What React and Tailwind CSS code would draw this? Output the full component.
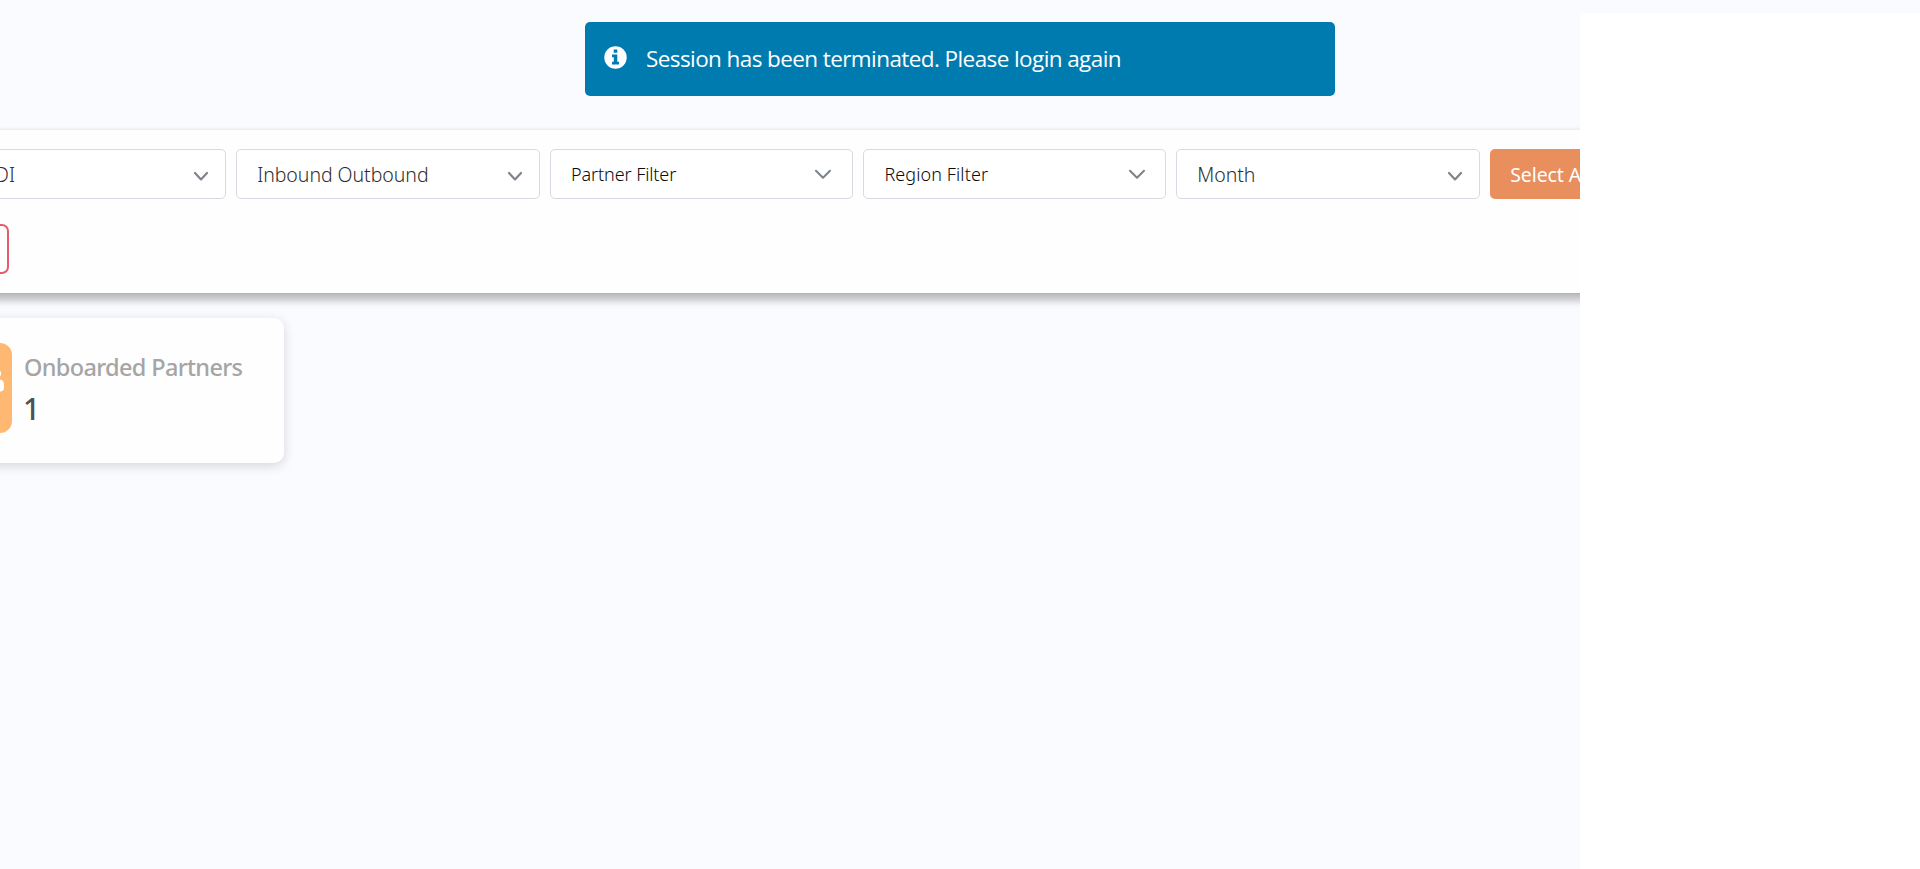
function Chevron({ wide = false }) {
  return wide ? (
    <svg className="h-[11px] w-[18px] shrink-0" viewBox="0 0 18 11" fill="none" stroke="#7f858d" strokeWidth="2.1" strokeLinecap="round" strokeLinejoin="round">
      <path d="M2 1.8 9 8.7 16 1.8" />
    </svg>
  ) : (
    <svg className="mt-[4px] h-[11px] w-[16px] shrink-0" viewBox="0 0 16 11" fill="none" stroke="#7f858d" strokeWidth="2.2" strokeLinecap="round" strokeLinejoin="round">
      <path d="M2 2 8 8.4 14 2" />
    </svg>
  );
}

const box = "flex h-[50px] w-[303.4px] shrink-0 items-center justify-between rounded-[5px] border border-[#d5dbe1] bg-white";

function Select({ label }) {
  return (
    <div className={`${box} pl-[20px] pr-[16px] text-[19.5px] text-[#2e2e2e]`}>
      <span className="pt-[2px] tracking-[-0.05px]">{label}</span>
      <Chevron />
    </div>
  );
}

function MultiSelect({ label, spacing }) {
  return (
    <div className={`${box} pl-[20.5px] pr-[19.5px] text-[18px] text-[#0c0c0c]`}>
      <span className={spacing}>{label}</span>
      <Chevron wide />
    </div>
  );
}

function Toast() {
  return (
    <div className="absolute left-[585px] top-[22px] flex h-[74px] w-[750px] items-center rounded-[5px] bg-[#007baf] pl-[19px] text-white">
      <svg className="mb-[3px] size-[23px] shrink-0" viewBox="0 0 23 23">
        <circle cx="11.5" cy="11.5" r="11.2" fill="#fff" />
        <path fill="#007baf" d="M9.7 3.4h3.6v3.4H9.7zM8 8.6h5.3v7.1H15V18.4H8v-2.7h1.8v-4.4H8z" />
      </svg>
      <p className="ml-[19px] whitespace-nowrap font-['Open_Sans','Noto_Sans',sans-serif] text-[22.5px] tracking-[-0.59px]">
        Session has been terminated. Please login again
      </p>
    </div>
  );
}

export default function App() {
  return (
    <div className="relative flex h-[869px] w-full flex-col overflow-hidden bg-[#fafbff] pt-[13px] font-['Noto_Sans','Open_Sans',sans-serif]">
      <div className="flex flex-1">
        <main className="flex w-[1580px] shrink-0 flex-col overflow-hidden pt-[116.5px]">
          <section className="-mx-[78px] flex h-[163.5px] shrink-0 flex-col gap-[25px] bg-[#fefefe] pl-[0.75px] pt-[19.5px] shadow-[0_0_4px_rgba(0,0,0,0.14),0_8px_7px_rgba(0,0,0,0.23)]">
            <div className="flex gap-[10px] whitespace-nowrap font-light">
              <div className={`${box} pl-[60.5px] pr-[16px] text-[19.5px] text-[#2e2e2e]`}>
                <span className="pt-[2px]">EDI</span>
                <Chevron />
              </div>
              <Select label="Inbound Outbound" />
              <MultiSelect label="Partner Filter" spacing="tracking-[-0.1px]" />
              <MultiSelect label="Region Filter" spacing="tracking-[0.1px]" />
              <Select label="Month" />
              <button className="h-[50px] w-[140px] shrink-0 rounded-[5px] bg-[#e98e5d] pl-[20.5px] pt-[2px] text-left text-[19.5px] font-normal tracking-[-0.1px] text-white">
                Select All
              </button>
            </div>
            <div className="-ml-[13.75px] h-[50px] w-[100px] rounded-[7px] border-2 border-[#e45d6c]" />
          </section>
          <article className="-ml-[98px] mt-[25px] flex h-[145px] w-[382px] shrink-0 items-start rounded-[10px] bg-[#fefefe] pl-[20px] pt-[25px] shadow-[0_3px_12px_rgba(0,0,0,0.15)]">
            <div className="flex h-[90px] w-[90px] shrink-0 items-center justify-end rounded-[12px] bg-[#ffb872] pr-[8px]">
              <svg className="mb-[15px] h-[40px] w-[50px]" viewBox="0 0 50 40" fill="#fff">
                <circle cx="23" cy="11" r="8" />
                <circle cx="42.3" cy="12.5" r="4.8" />
                <path d="M7 36v-5q0-9 9-9h14q4 0 4 4v10zM36 18.5h9.5q4.5 0 4.5 5v3q0 4-4 4H36z" />
              </svg>
            </div>
            <div className="ml-[12px] mt-[6px] flex flex-col whitespace-nowrap">
              <h3 className="h-[36px] text-[23.5px] font-medium leading-[36px] tracking-[-0.65px] text-[#a5a5a5]">Onboarded Partners</h3>
              <p className="-ml-px mt-[2px] h-[44px] text-[30px] font-medium leading-[44px] text-[#4d5158]">1</p>
            </div>
          </article>
        </main>
        <aside className="flex-1 bg-white" />
      </div>
      <Toast />
    </div>
  );
}
